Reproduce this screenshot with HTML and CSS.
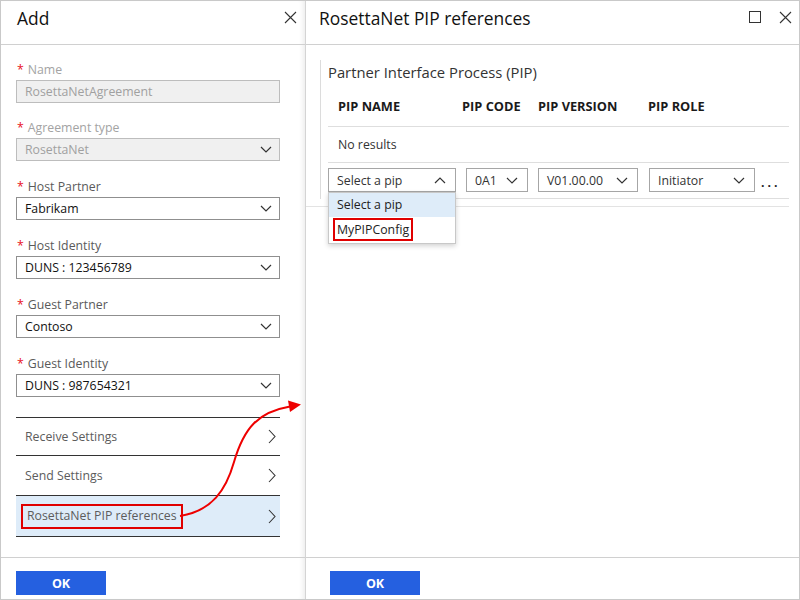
FILE: index.html
```html
<!DOCTYPE html>
<html>
<head>
<meta charset="utf-8">
<link rel="stylesheet" href="styles.css">
</head>
<body>
<div class="frame">
  <section class="blade left">
    <header class="bhead">
      <h1 class="btitle">Add</h1>
      <div class="hicons">
        <svg class="ico" width="13" height="13" viewBox="0 0 13 13"><path d="M1 1L12 12M12 1L1 12" stroke="#333" stroke-width="1.1" fill="none"/></svg>
      </div>
    </header>
    <div class="bbody">
      <div class="field">
        <div class="lbl dis"><span class="req">*</span>Name</div>
        <div class="input dis">RosettaNetAgreement</div>
      </div>
      <div class="field">
        <div class="lbl dis"><span class="req">*</span>Agreement type</div>
        <div class="input dis sel">RosettaNet<svg class="chev" width="12" height="7" viewBox="0 0 12 7"><path d="M1 1L6 6L11 1" stroke="#333" stroke-width="1.2" fill="none"/></svg></div>
      </div>
      <div class="field">
        <div class="lbl"><span class="req">*</span>Host Partner</div>
        <div class="input sel">Fabrikam<svg class="chev" width="12" height="7" viewBox="0 0 12 7"><path d="M1 1L6 6L11 1" stroke="#333" stroke-width="1.2" fill="none"/></svg></div>
      </div>
      <div class="field">
        <div class="lbl"><span class="req">*</span>Host Identity</div>
        <div class="input sel">DUNS : 123456789<svg class="chev" width="12" height="7" viewBox="0 0 12 7"><path d="M1 1L6 6L11 1" stroke="#333" stroke-width="1.2" fill="none"/></svg></div>
      </div>
      <div class="field">
        <div class="lbl"><span class="req">*</span>Guest Partner</div>
        <div class="input sel">Contoso<svg class="chev" width="12" height="7" viewBox="0 0 12 7"><path d="M1 1L6 6L11 1" stroke="#333" stroke-width="1.2" fill="none"/></svg></div>
      </div>
      <div class="field">
        <div class="lbl"><span class="req">*</span>Guest Identity</div>
        <div class="input sel">DUNS : 987654321<svg class="chev" width="12" height="7" viewBox="0 0 12 7"><path d="M1 1L6 6L11 1" stroke="#333" stroke-width="1.2" fill="none"/></svg></div>
      </div>
      <ul class="nav">
        <li class="navitem"><span class="navtext">Receive Settings</span><svg width="8" height="15" viewBox="0 0 8 15"><path d="M1 1L7 7.5L1 14" stroke="#333" stroke-width="1.1" fill="none"/></svg></li>
        <li class="navitem"><span class="navtext">Send Settings</span><svg width="8" height="15" viewBox="0 0 8 15"><path d="M1 1L7 7.5L1 14" stroke="#333" stroke-width="1.1" fill="none"/></svg></li>
        <li class="navitem active"><span class="navtext boxed">RosettaNet PIP references</span><svg width="8" height="15" viewBox="0 0 8 15"><path d="M1 1L7 7.5L1 14" stroke="#333" stroke-width="1.1" fill="none"/></svg></li>
      </ul>
    </div>
    <footer class="bfoot"><button class="ok">OK</button></footer>
  </section>

  <section class="blade right">
    <header class="bhead rhead">
      <h1 class="btitle">RosettaNet PIP references</h1>
      <div class="hicons">
        <svg class="ico" width="12" height="12" viewBox="0 0 12 12"><rect x="0.5" y="0.5" width="11" height="11" stroke="#333" stroke-width="1" fill="none"/></svg>
        <svg class="ico" width="13" height="13" viewBox="0 0 13 13"><path d="M1 1L12 12M12 1L1 12" stroke="#333" stroke-width="1.1" fill="none"/></svg>
      </div>
    </header>
    <div class="rbody">
      <div class="wrap">
        <div class="pipsec">
          <div class="sectitle">Partner Interface Process (PIP)</div>
          <div class="grid thead">
            <div class="th first">PIP NAME</div>
            <div class="th code">PIP CODE</div>
            <div class="th">PIP VERSION</div>
            <div class="th">PIP ROLE</div>
          </div>
          <div class="noresults">No results</div>
          <div class="grid drow">
            <div class="dd open">
              <span>Select a pip</span>
              <svg width="12" height="7" viewBox="0 0 12 7"><path d="M1 6L6 1L11 6" stroke="#333" stroke-width="1.2" fill="none"/></svg>
              <ul class="menu">
                <li class="opt hl">Select a pip</li>
                <li class="opt"><span class="redbox">MyPIPConfig</span></li>
              </ul>
            </div>
            <div class="dd"><span>0A1</span><svg width="12" height="7" viewBox="0 0 12 7"><path d="M1 1L6 6L11 1" stroke="#333" stroke-width="1.2" fill="none"/></svg></div>
            <div class="dd"><span>V01.00.00</span><svg width="12" height="7" viewBox="0 0 12 7"><path d="M1 1L6 6L11 1" stroke="#333" stroke-width="1.2" fill="none"/></svg></div>
            <div class="dd"><span>Initiator</span><svg width="12" height="7" viewBox="0 0 12 7"><path d="M1 1L6 6L11 1" stroke="#333" stroke-width="1.2" fill="none"/></svg></div>
            <div class="more">...</div>
          </div>
        </div>
      </div>
    </div>
    <footer class="bfoot rfoot"><button class="ok">OK</button></footer>
  </section>

  <svg class="arrow" width="800" height="600" viewBox="0 0 800 600">
    <path d="M180 516 C 212 511, 226 490, 234 462 C 244 428, 258 412, 290 406.5" stroke="#ee0000" stroke-width="2" fill="none"/>
    <polygon points="301,404.5 288,400.5 290,412" fill="#ee0000"/>
  </svg>
</div>
</body>
</html>
```

FILE: styles.css
```css
* { box-sizing: border-box; }
html, body { margin: 0; padding: 0; background: #fff; }
body { font-family: "Segoe UI", "Open Sans", "Noto Sans", sans-serif; font-size: 12.3px; color: #1e1e1e; }

.frame {
  position: relative;
  width: 800px;
  height: 600px;
  border: 1px solid #c9c9c9;
  display: flex;
  overflow: hidden;
}

.blade { display: flex; flex-direction: column; height: 598px; background: #fff; }
.left {
  width: 305px;
  flex-shrink: 0;
  border-right: 1px solid #d4d4d4;
  box-shadow: inset -5px 0 5px -3px rgba(0,0,0,0.08);
}
.right { flex: 1; min-width: 0; }

.bhead {
  height: 44px;
  border-bottom: 1px solid #d0d0d0;
  display: flex;
  align-items: flex-start;
  justify-content: space-between;
  padding: 0 8px 0 16px;
}
.rhead { padding: 0 7px 0 13px; }
.btitle {
  margin: 0;
  font-size: 17.4px;
  font-weight: 400;
  line-height: 22px;
  padding-top: 6px;
  color: #111;
}
.hicons { display: flex; gap: 18px; padding-top: 10px; }
.ico { display: block; }

.bbody { flex: 1; padding: 17px 25px 0 15px; }
.field { margin-bottom: 18px; }
.field:first-child { margin-bottom: 17px; }
.lbl { height: 16px; line-height: 16px; margin-bottom: 2px; padding-left: 1px; color: #5a5a5a; }
.lbl.dis { color: #a3a3a3; }
.req { color: #e81123; margin-right: 4px; }
.input {
  height: 23px;
  border: 1px solid #8f8f8f;
  padding: 0 7px 0 8px;
  line-height: 21px;
  color: #111;
  display: flex;
  align-items: center;
  justify-content: space-between;
}
.input.dis { background: #f0f0f0; border-color: #bdbdbd; color: #a0a0a0; }
.chev { display: block; }

.nav { list-style: none; margin: 20px 0 0 0; padding: 0; }
.navitem {
  height: 38px;
  border-top: 1px solid #333;
  display: flex;
  align-items: center;
  justify-content: space-between;
  padding: 0 4px 0 9px;
  color: #5c5c5c;
}
.navitem:nth-child(2) { height: 40px; }
.navitem:last-child { border-bottom: 1px solid #333; height: 42px; }
.navitem.active { background: #deecf9; padding-left: 5px; }
.boxed { border: 2px solid #e00000; padding: 1px 4px 2px 4px; line-height: 18px; }

.bfoot { height: 42px; border-top: 1px solid #d0d0d0; padding: 13px 0 0 15px; }
.rfoot { padding-left: 24px; }
.ok {
  width: 90px;
  height: 24px;
  border: 0;
  background: #2560e0;
  color: #fff;
  font-family: "Segoe UI", "Open Sans", "Noto Sans", sans-serif;
  font-weight: 700;
  font-size: 12.5px;
  padding: 0;
}

.rbody { flex: 1; padding: 15px 10px 0 0; }
.wrap { border-bottom: 1px solid #e3e3e3; padding: 0 0 7px 14px; }
.pipsec { border-left: 1px solid #dcdcdc; padding: 2px 0 0 7px; }
.sectitle { font-size: 14.8px; line-height: 20px; color: #333; }

.grid { display: grid; grid-template-columns: 128px 62px 100px 107px 24px; column-gap: 10px; }
.thead {
  margin-top: 14px;
  height: 31px;
  line-height: 20px;
  border-bottom: 1px solid #dedede;
  font-weight: 700;
  font-size: 12.8px;
  color: #1a1a1a;
}
.th { white-space: nowrap; }
.th.first { padding-left: 10px; }
.th.code { margin-left: -4px; }
.noresults { height: 36px; line-height: 35px; padding-left: 10px; border-bottom: 1px solid #dedede; color: #333; }
.drow { padding: 5px 0 6px 0; border-bottom: 1px solid #dedede; }
.drow > .dd:nth-child(4) { margin-left: 1px; }
.dd {
  position: relative;
  height: 24px;
  border: 1px solid #a6a6a6;
  display: flex;
  align-items: center;
  justify-content: space-between;
  padding: 0 9px 0 8px;
  color: #333;
}
.dd svg { display: block; }
.more { font-weight: 700; margin-left: -4px; height: 24px; line-height: 30px; letter-spacing: 3px; color: #222; white-space: nowrap; }

.menu {
  position: absolute;
  left: -1px;
  top: 23px;
  width: 128px;
  margin: 0;
  padding: 0;
  list-style: none;
  background: #fff;
  border: 1px solid #c8c8c8;
  box-shadow: 0 2px 5px rgba(0,0,0,0.18);
  z-index: 2;
}
.opt { height: 25px; line-height: 24px; padding-left: 8px; color: #222; }
.opt.hl { background: #deecf9; height: 24px; }
.opt:last-child { height: 26px; padding-left: 4px; padding-top: 1px; }
.redbox { display: inline-block; border: 2px solid #e00000; padding: 0 2px; line-height: 19px; }

.arrow { position: absolute; left: -1px; top: -1px; pointer-events: none; z-index: 3; }
```
